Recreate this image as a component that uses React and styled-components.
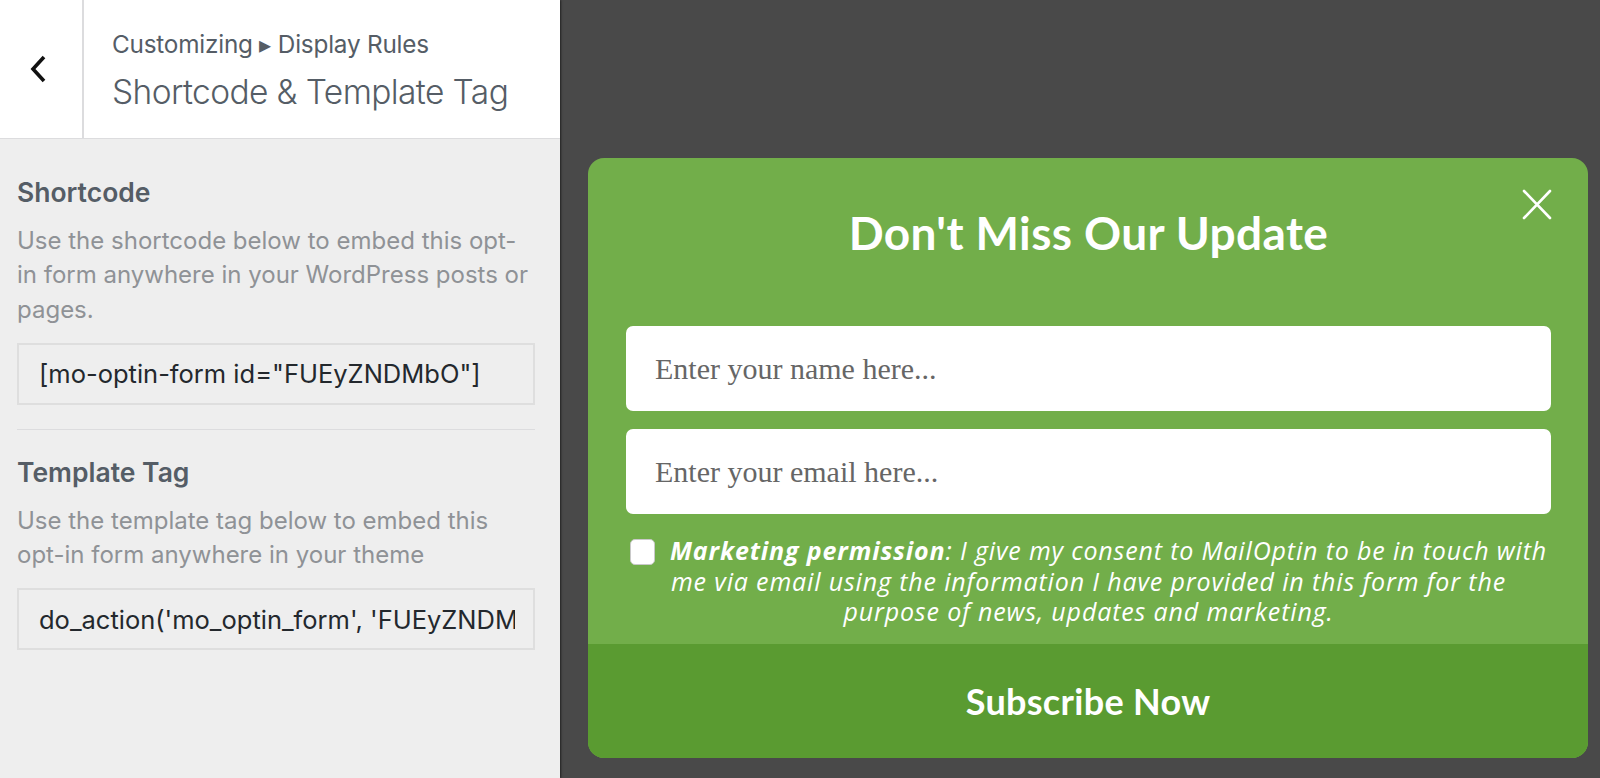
import React from 'react';
import styled, { createGlobalStyle } from 'styled-components';

const GlobalStyle = createGlobalStyle`
  html, body {
    margin: 0;
    padding: 0;
    height: 100%;
    overflow: hidden;
  }
  #root {
    height: 100%;
  }
  * {
    box-sizing: border-box;
  }
`;

const Page = styled.div`
  display: flex;
  height: 100vh;
  background: #494949;
`;

const Sidebar = styled.aside`
  width: 560px;
  flex-shrink: 0;
  background: #eeeeee;
  display: flex;
  flex-direction: column;
  box-shadow: 1px 0 2px rgba(0, 0, 0, 0.55);
  font-family: Inter, 'Liberation Sans', sans-serif;
  position: relative;
  z-index: 1;
`;

const Header = styled.div`
  height: 139px;
  background: #fff;
  border-bottom: 1px solid #dcdcde;
  display: flex;
`;

const BackButton = styled.button`
  width: 84px;
  border: none;
  border-right: 2px solid #dcdcde;
  background: transparent;
  display: flex;
  align-items: center;
  justify-content: center;
  padding: 0 6px 0 0;
  cursor: pointer;
`;

const HeaderTitles = styled.div`
  display: flex;
  flex-direction: column;
  padding: 29px 0 0 28px;
  color: #555d66;
`;

const Breadcrumb = styled.span`
  font-size: 24.3px;
  line-height: 30px;
  letter-spacing: -0.2px;
`;

const PanelTitle = styled.h1`
  margin: 13px 0 0;
  font-size: 33.5px;
  font-weight: 300;
  line-height: 40px;
  letter-spacing: -0.6px;
`;

const Body = styled.div`
  padding: 38px 25px 0 17px;
`;

const Section = styled.section`
  padding-bottom: 24px;
  & + & {
    border-top: 1px solid #dcdcde;
    padding-top: 27px;
  }
`;

const SectionTitle = styled.h3`
  margin: 0 0 17px;
  font-size: 26.5px;
  font-weight: 600;
  line-height: 30px;
  color: #555d66;
`;

const Description = styled.p`
  margin: 0 0 16px;
  font-size: 24px;
  line-height: 34.3px;
  color: #8f9296;
`;

const CodeField = styled.input`
  display: block;
  width: 100%;
  height: 62px;
  border: 2px solid #dedede;
  background: #eeeeee;
  padding: 0 18px 0 20px;
  font-family: Inter, 'Liberation Sans', sans-serif;
  font-size: 25.5px;
  color: #23282d;
  outline: none;
`;

const Preview = styled.main`
  flex: 1;
  padding: 158px 12px 20px 28px;
  display: flex;
`;

const Modal = styled.div`
  position: relative;
  width: 1000px;
  height: 600px;
  background: #72ae4a;
  border-radius: 16px;
  overflow: hidden;
  display: flex;
  flex-direction: column;
  font-family: Lato, 'Open Sans', sans-serif;
  color: #fff;
`;

const CloseButton = styled.button`
  position: absolute;
  top: 31px;
  right: 36px;
  width: 30px;
  height: 31px;
  padding: 0;
  border: none;
  background: transparent;
  cursor: pointer;
`;

const ModalContent = styled.div`
  flex: 1;
  padding: 48px 37px 0 38px;
  display: flex;
  flex-direction: column;
`;

const Headline = styled.h2`
  margin: 0 0 67px;
  text-align: center;
  font-size: 46px;
  font-weight: 700;
  line-height: 53px;
  letter-spacing: 0.4px;
`;

const Field = styled.input`
  display: block;
  width: 100%;
  height: 85px;
  border: none;
  border-radius: 7px;
  background: #fff;
  padding: 0 29px;
  font-family: 'Liberation Serif', serif;
  font-size: 30px;
  color: #444;
  outline: none;
  margin-bottom: ${(p) => p.$gap || 0}px;
  &::placeholder {
    color: #666;
  }
`;

const Consent = styled.label`
  display: block;
  margin-top: 21px;
  text-align: center;
  font-family: 'Open Sans', Lato, sans-serif;
  font-style: italic;
  font-size: 25px;
  line-height: 30.5px;
  letter-spacing: 0.85px;
  white-space: nowrap;
`;

const Check = styled.input`
  appearance: none;
  width: 25px;
  height: 26px;
  margin: 0 15px 0 0;
  border-radius: 5px;
  border: 1px solid #c9c9c9;
  background: #fff;
  vertical-align: -5px;
`;

const SubmitButton = styled.button`
  height: 114px;
  border: none;
  background: #5a9b31;
  color: #fff;
  font-family: Lato, 'Open Sans', sans-serif;
  font-size: 36px;
  font-weight: 700;
  letter-spacing: 0.3px;
  cursor: pointer;
`;

export default function App() {
  return (
    <>
      <GlobalStyle />
      <Page>
        <Sidebar>
          <Header>
            <BackButton aria-label="Back">
              <svg width="17" height="28" viewBox="0 0 17 28">
                <path d="M14 2 L3 14 L14 26" fill="none" stroke="#111" strokeWidth="3.6" />
              </svg>
            </BackButton>
            <HeaderTitles>
              <Breadcrumb>Customizing ▸ Display Rules</Breadcrumb>
              <PanelTitle>Shortcode &amp; Template Tag</PanelTitle>
            </HeaderTitles>
          </Header>
          <Body>
            <Section>
              <SectionTitle>Shortcode</SectionTitle>
              <Description>
                Use the shortcode below to embed this opt-
                <br />
                in form anywhere in your WordPress posts or
                <br />
                pages.
              </Description>
              <CodeField readOnly value={'[mo-optin-form id="FUEyZNDMbO"]'} />
            </Section>
            <Section>
              <SectionTitle>Template Tag</SectionTitle>
              <Description>
                Use the template tag below to embed this
                <br />
                opt-in form anywhere in your theme
              </Description>
              <CodeField readOnly value={"do_action('mo_optin_form', 'FUEyZNDMbO');"} />
            </Section>
          </Body>
        </Sidebar>
        <Preview>
          <Modal>
            <CloseButton aria-label="Close">
              <svg width="30" height="31" viewBox="0 0 30 31">
                <path d="M2 2 L28 29 M28 2 L2 29" stroke="#fff" strokeWidth="2.6" strokeLinecap="round" />
              </svg>
            </CloseButton>
            <ModalContent>
              <Headline>Don't Miss Our Update</Headline>
              <Field $gap={18} placeholder="Enter your name here..." />
              <Field placeholder="Enter your email here..." />
              <Consent>
                <Check type="checkbox" />
                <strong>Marketing permission</strong>: I give my consent to MailOptin to be in touch with
                <br />
                me via email using the information I have provided in this form for the
                <br />
                purpose of news, updates and marketing.
              </Consent>
            </ModalContent>
            <SubmitButton>Subscribe Now</SubmitButton>
          </Modal>
        </Preview>
      </Page>
    </>
  );
}
